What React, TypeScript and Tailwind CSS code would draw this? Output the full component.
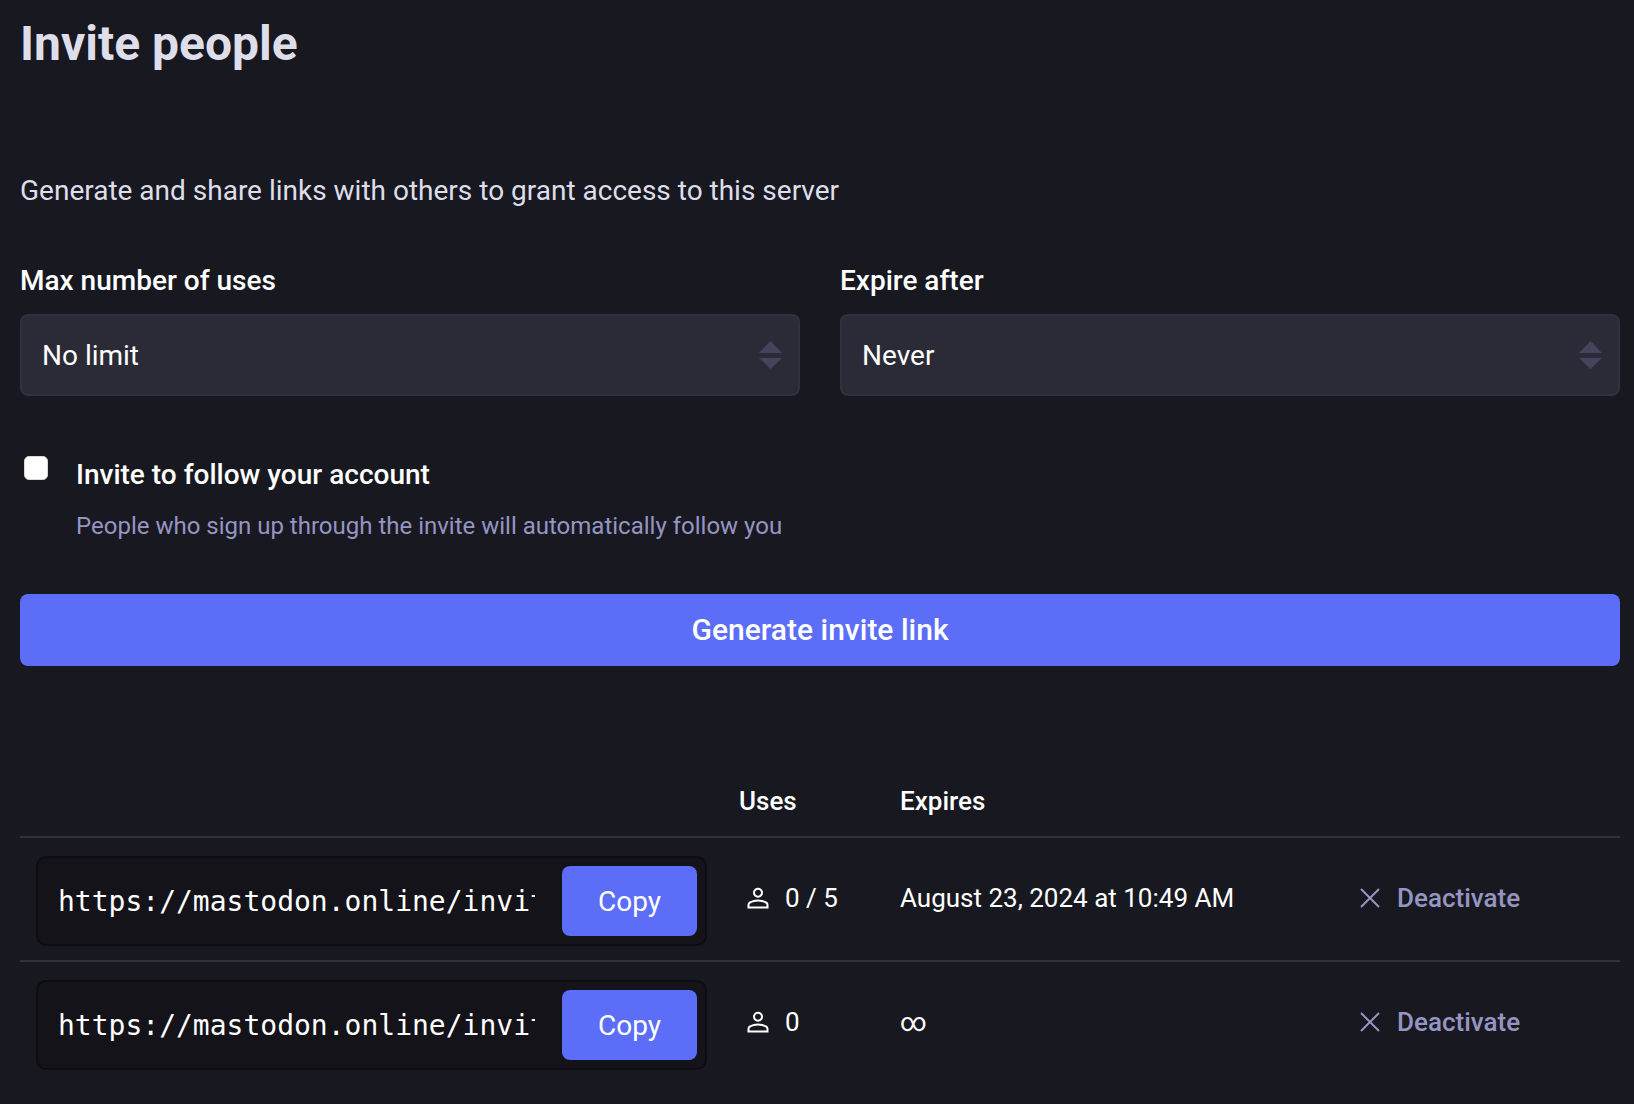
const rows = [
  { uses: "0 / 5", expires: "August 23, 2024 at 10:49 AM" },
  { uses: "0", expires: "∞" },
];

function PersonIcon() {
  return (
    <svg viewBox="0 -960 960 960" className="h-8 w-8 shrink-0" fill="currentColor">
      <path d="M480-490q-62 0-106-44t-44-106q0-62 44-106t106-44q62 0 106 44t44 106q0 62-44 106t-106 44ZM165-165v-107q0-33 17-61t46-43q60-30 123-45t129-15q66 0 129 15t123 45q29 15 46 43t17 61v107H165Zm60-60h510v-47q0-15-7.5-27T708-318q-55-27-112-41t-116-14q-59 0-116 14t-112 41q-12 7-19.5 19t-7.5 27v47Zm255-325q37 0 63.5-26.5T570-640q0-37-26.5-63.5T480-730q-37 0-63.5 26.5T390-640q0 37 26.5 63.5T480-550Z" />
    </svg>
  );
}

function CloseIcon() {
  return (
    <svg viewBox="0 0 20 20" className="h-5 w-5 shrink-0" fill="none" stroke="currentColor" strokeWidth="2">
      <path d="M1 1l18 18M19 1L1 19" />
    </svg>
  );
}

function SelectBox({ label, value }: { label: string; value: string }) {
  return (
    <div className="flex-1">
      <div className="text-[28px] leading-[38px] font-medium text-white">{label}</div>
      <div className="relative mt-[14px]">
        <select className="h-[82px] w-full appearance-none rounded-lg border-2 border-[#30303f] bg-[#2b2b38] pt-[2px] pl-5 text-[28px] text-white outline-none">
          <option>{value}</option>
        </select>
        <svg viewBox="0 0 23 28" className="pointer-events-none absolute top-[27px] right-[18px] h-[28px] w-[23px]" fill="#44445c">
          <path d="M11.5 0L23 12H0Z" />
          <path d="M0 17h23L11.5 28Z" />
        </svg>
      </div>
    </div>
  );
}

export default function App() {
  return (
    <div className="min-h-[1104px] bg-[#181820] pr-[14px] pl-5 font-['Roboto',sans-serif] text-white">
      <h1 className="pt-[15px] text-[48px] leading-[58px] font-bold text-[#dedeea]">Invite people</h1>
      <p className="mt-[99px] text-[28px] leading-[38px] text-[#dedeea]">
        Generate and share links with others to grant access to this server
      </p>
      <div className="mt-[52px] flex gap-10">
        <SelectBox label="Max number of uses" value="No limit" />
        <SelectBox label="Expire after" value="Never" />
      </div>
      <div className="mt-[60px] flex items-start pl-1">
        <input type="checkbox" className="h-6 w-6 appearance-none rounded-[5px] border border-[#d8d8d8] bg-white" />
        <div className="ml-[28px]">
          <div className="text-[28px] leading-[38px] font-medium text-white">Invite to follow your account</div>
          <div className="mt-[13px] text-[24px] leading-[38px] text-[#9595c2]">
            People who sign up through the invite will automatically follow you
          </div>
        </div>
      </div>
      <button className="mt-[49px] block h-[72px] w-full rounded-lg bg-[#5c6df8] pb-[2px] text-[30px] font-medium text-white">
        Generate invite link
      </button>
      <div className="mt-[118px] grid grid-cols-[703px_162px_460px_1fr] border-b-2 border-[#30303f] pb-[18px] text-[26px] leading-[34px] font-medium">
        <div />
        <div className="pl-4">Uses</div>
        <div className="pl-[15px]">Expires</div>
        <div />
      </div>
      {rows.map((row, i) => (
        <div
          key={row.uses}
          className={`grid grid-cols-[703px_162px_460px_1fr] items-center pt-[18px] pb-[14px] ${i === 0 ? "border-b-2 border-[#30303f]" : ""}`}
        >
          <div className="pl-4">
            <div className="flex h-[90px] w-[671px] items-center rounded-[10px] border-2 border-[#0d0d11] bg-[#131319] pr-2 pl-[20px]">
              <input
                readOnly
                value="https://mastodon.online/invite/aBcDeFgH"
                className="w-[477px] bg-transparent pt-[2px] font-['DejaVu_Sans_Mono',monospace] text-[28px] text-white outline-none"
              />
              <button className="ml-[27px] h-[70px] w-[135px] rounded-lg bg-[#5c6df8] pt-[2px] text-[28px] text-white">Copy</button>
            </div>
          </div>
          <div className="flex items-center gap-[11px] pb-[6px] pl-[19px] text-[26px]">
            <PersonIcon />
            <span>{row.uses}</span>
          </div>
          <div className="pb-[6px] pl-[15px] text-[26px]">{row.expires}</div>
          <div className="flex items-center gap-[17px] pb-[6px] pl-[15px] text-[26px] font-medium text-[#9595c2]">
            <CloseIcon />
            <span>Deactivate</span>
          </div>
        </div>
      ))}
    </div>
  );
}
